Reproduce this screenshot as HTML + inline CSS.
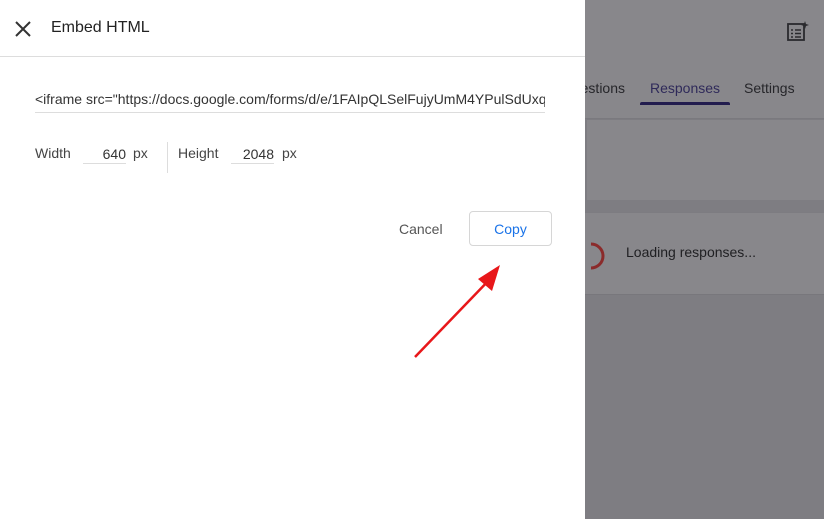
<!DOCTYPE html>
<html><head><style>
body{margin:0;width:824px;height:519px;position:relative;overflow:hidden;font-family:"Liberation Sans",Arial,sans-serif;background:#7e7d82}
.abs{position:absolute}
</style></head><body>
<div class="abs" style="left:585px;top:0;width:239px;height:118px;background:#878690"></div>
<div class="abs" style="left:585px;top:0;width:239px;height:118px;background:#88878b"></div>
<div class="abs" style="left:585px;top:118px;width:239px;height:1px;background:#7a797e"></div>
<div class="abs" style="left:587px;top:119px;width:237px;height:80px;background:#88878b;border-top:1px solid #7d7c81"></div>
<div class="abs" style="left:585px;top:212px;width:239px;height:81px;background:#88878b;border-top:1px solid #7d7c81;border-bottom:1px solid #78777c"></div>
<svg class="abs" style="left:786px;top:21px" width="24" height="22" viewBox="0 0 24 22"><rect x="2" y="3" width="16" height="16" fill="none" stroke="#2a2a2e" stroke-width="1.8"/><path d="M5 9h2M9 9h6M5 12.5h2M9 12.5h6M5 16h2M9 16h6" stroke="#2a2a2e" stroke-width="1.6"/><path d="M19 0l1 3 3 1-3 1-1 3-1-3-3-1 3-1z" fill="#2a2a2e"/></svg>
<div class="abs" style="left:585px;top:80px;font-size:14px;color:#26262a;width:40px;overflow:hidden;white-space:nowrap;direction:rtl">estions</div>
<div class="abs" style="left:650px;top:80px;font-size:14px;color:#2f2a5a">Responses</div>
<div class="abs" style="left:640px;top:102px;width:90px;height:3px;background:#221c4e;border-radius:2px 2px 0 0"></div>
<div class="abs" style="left:744px;top:80px;font-size:14px;color:#26262a">Settings</div>
<svg class="abs" style="left:580px;top:238px" width="32" height="32"><path d="M11 6a10 10 0 0 1 0 24" fill="none" stroke="#8b2b2b" stroke-width="3"/></svg>
<div class="abs" style="left:626px;top:244px;font-size:14px;color:#1f1f22">Loading responses...</div>

<div class="abs" style="left:0;top:0;width:585px;height:519px;background:#fff"></div>
<svg class="abs" style="left:14px;top:20px" width="18" height="18"><path d="M2 2L16 16M16 2L2 16" stroke="#333" stroke-width="2"/></svg>
<div class="abs" style="left:51px;top:19px;font-size:16px;color:#222">Embed HTML</div>
<div class="abs" style="left:0;top:56px;width:585px;height:1px;background:#ddd"></div>
<div class="abs" style="left:35px;top:91px;width:510px;font-size:14px;color:#333;white-space:nowrap;overflow:hidden">&lt;iframe src="https://docs.google.com/forms/d/e/1FAIpQLSelFujyUmM4YPulSdUxq</div>
<div class="abs" style="left:35px;top:112px;width:510px;height:1px;background:#ddd"></div>
<div class="abs" style="left:35px;top:145px;font-size:14px;color:#444">Width</div>
<div class="abs" style="left:83px;top:146px;width:43px;font-size:14px;color:#333;text-align:right">640</div>
<div class="abs" style="left:83px;top:163px;width:43px;height:1px;background:#ddd"></div>
<div class="abs" style="left:133px;top:145px;font-size:14px;color:#444">px</div>
<div class="abs" style="left:167px;top:142px;width:1px;height:31px;background:#ddd"></div>
<div class="abs" style="left:178px;top:145px;font-size:14px;color:#444">Height</div>
<div class="abs" style="left:231px;top:146px;width:43px;font-size:14px;color:#333;text-align:right">2048</div>
<div class="abs" style="left:231px;top:163px;width:43px;height:1px;background:#ddd"></div>
<div class="abs" style="left:282px;top:145px;font-size:14px;color:#444">px</div>
<div class="abs" style="left:399px;top:221px;font-size:14px;color:#555">Cancel</div>
<div class="abs" style="left:469px;top:211px;width:83px;height:35px;border:1px solid #d6d6d6;border-radius:4px;box-sizing:border-box"></div>
<div class="abs" style="left:469px;top:221px;width:83px;text-align:center;font-size:14px;color:#1a73e8">Copy</div>
<svg class="abs" style="left:400px;top:255px" width="110" height="110"><path d="M15 102L92 22" stroke="#e8171a" stroke-width="2.5"/><path d="M100 10L78 24L92 36Z" fill="#e8171a"/></svg>
</body></html>
